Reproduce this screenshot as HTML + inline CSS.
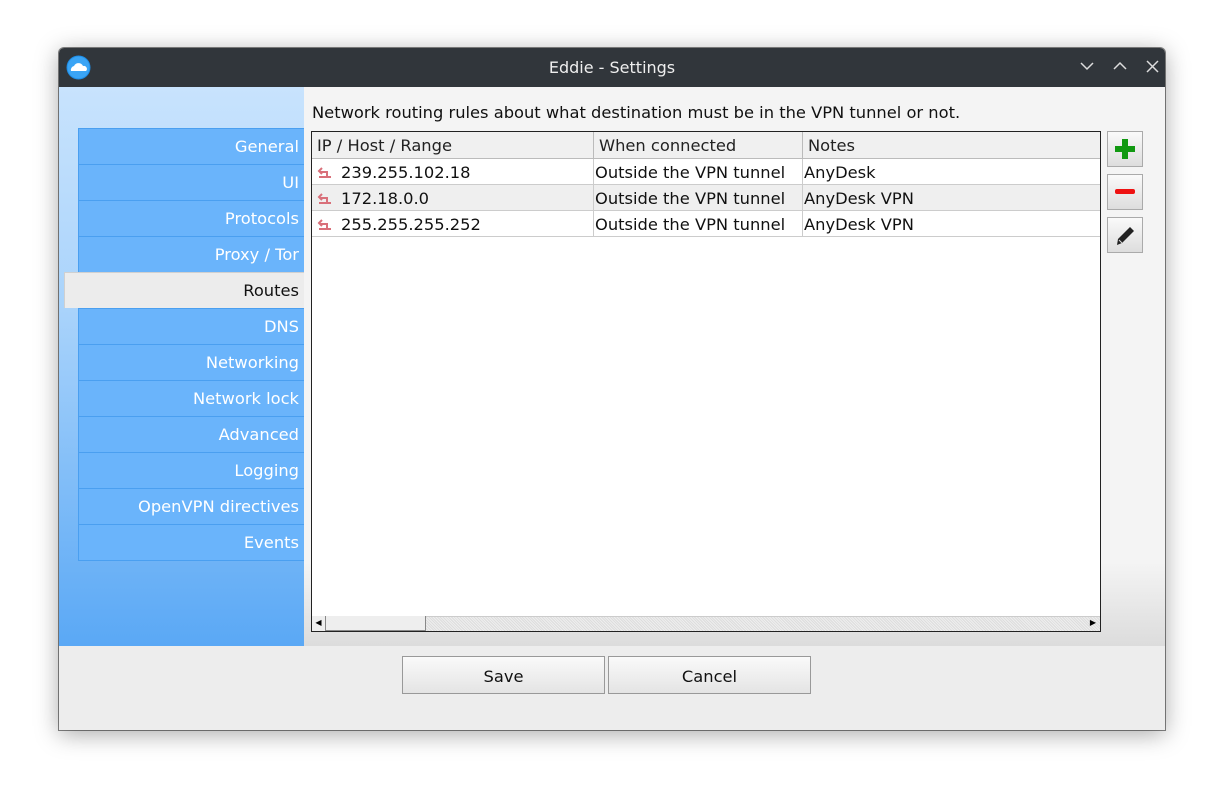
<!DOCTYPE html>
<html><head><meta charset="utf-8"><style>
*{box-sizing:border-box;margin:0;padding:0}
body{width:1224px;height:800px;background:#fff;font-family:"DejaVu Sans","Liberation Sans",sans-serif;position:relative;overflow:hidden}
.win{position:absolute;left:59px;top:48px;width:1106px;height:682px;background:#ededed;box-shadow:0 4px 24px rgba(0,0,0,.35),0 0 0 1px #888;border-radius:5px 5px 0 0;overflow:hidden}
.tb{position:absolute;left:0;top:0;width:100%;height:39px;background:#31363b;color:#eee;font-size:16px;text-align:center;line-height:40px}
.left{position:absolute;left:0;top:39px;width:245px;height:559px;background:linear-gradient(#c8e3fd,#a9d3fb 40%,#5aa8f5)}
.nav{position:absolute;left:19px;width:226px;height:36px;background:#6ab4fb;border-top:1px solid #4a9ff0;border-left:1px solid #4a9ff0;color:#fff;font-size:16.3px;text-align:right;padding-right:5px;line-height:36px}
.sel{left:5px;width:240px;background:#ececec;color:#111;border-color:#d0d0d0}
.right{position:absolute;left:245px;top:39px;width:861px;height:559px;background:linear-gradient(#f4f4f4 85%,#dcdcdc)}
.desc{position:absolute;left:253px;top:55px;font-size:16.3px;color:#111}
.tbl{position:absolute;left:252px;top:83px;width:790px;height:501px;background:#fff;border:1px solid #222}
.hd{position:absolute;top:0;height:27px;background:#f0f0f0;border-right:1px solid #bbb;border-bottom:1px solid #bbb;font-size:16.3px;line-height:28px;padding-left:5px;color:#222}
.row{position:absolute;left:0;width:788px;height:26px;border-bottom:1px solid #ccc;font-size:16.3px;line-height:27px;color:#111}
.row span{position:absolute;top:0}
.c{position:absolute;top:0;height:26px;border-right:1px solid #ccc}
.sb{position:absolute;left:0;bottom:0;width:788px;height:15px;background:repeating-linear-gradient(45deg,#ddd 0 1px,#eee 1px 2px);border-top:1px solid #ccc}
.ib{position:absolute;left:1048px;width:36px;height:36px;border:1px solid #aaa;background:linear-gradient(#fafafa,#ddd)}
.btn{position:absolute;top:608px;width:203px;height:38px;border:1px solid #999;background:linear-gradient(#fafafa,#e4e4e4);font-size:16.3px;text-align:center;line-height:39px;color:#111;font-weight:500}
</style></head><body>
<div class="win">
<div class="tb">Eddie - Settings
<svg style="position:absolute;left:7px;top:7px" width="25" height="25"><circle cx="12.5" cy="12.5" r="12" fill="#1d8ee8"/><circle cx="12.5" cy="12.5" r="11" fill="#3aa4f5"/><path d="M5 16 a4 4 0 0 1 3-5 a5 5 0 0 1 9 0 a3 3 0 0 1 3 5z" fill="#fff"/></svg>
<svg style="position:absolute;right:0;top:0" width="100" height="39" fill="none" stroke="#ddd" stroke-width="1.5"><path d="M16 15l6 6 6-6M49 21l6-6 6 6M82 13l11 11M93 13l-11 11"/></svg>
</div>
<div class="left">
<div class="nav" style="top:41px">General</div>
<div class="nav" style="top:77px">UI</div>
<div class="nav" style="top:113px">Protocols</div>
<div class="nav" style="top:149px">Proxy / Tor</div>
<div class="nav sel" style="top:185px">Routes</div>
<div class="nav" style="top:221px">DNS</div>
<div class="nav" style="top:257px">Networking</div>
<div class="nav" style="top:293px">Network lock</div>
<div class="nav" style="top:329px">Advanced</div>
<div class="nav" style="top:365px">Logging</div>
<div class="nav" style="top:401px">OpenVPN directives</div>
<div class="nav" style="top:437px;border-bottom:1px solid #4a9ff0;height:37px">Events</div>
</div>
<div class="right"></div>
<div class="desc">Network routing rules about what destination must be in the VPN tunnel or not.</div>
<div class="tbl">
<div class="hd" style="left:0;width:282px">IP / Host / Range</div>
<div class="hd" style="left:282px;width:209px">When connected</div>
<div class="hd" style="left:491px;width:297px;border-right:none">Notes</div>
<div class="row" style="top:27px;background:#fff"><div class="c" style="left:0;width:282px"></div><div class="c" style="left:282px;width:209px"></div><svg style="position:absolute;left:5px;top:5px" width="16" height="15" fill="none" stroke="#d9707a" stroke-width="2"><path d="M2 13h12M10 13V8H3M5 4L2 7l3 3"/></svg><span style="left:29px">239.255.102.18</span><span style="left:283px">Outside the VPN tunnel</span><span style="left:492px">AnyDesk</span></div>
<div class="row" style="top:53px;background:#efefef"><div class="c" style="left:0;width:282px"></div><div class="c" style="left:282px;width:209px"></div><svg style="position:absolute;left:5px;top:5px" width="16" height="15" fill="none" stroke="#d9707a" stroke-width="2"><path d="M2 13h12M10 13V8H3M5 4L2 7l3 3"/></svg><span style="left:29px">172.18.0.0</span><span style="left:283px">Outside the VPN tunnel</span><span style="left:492px">AnyDesk VPN</span></div>
<div class="row" style="top:79px;background:#fff"><div class="c" style="left:0;width:282px"></div><div class="c" style="left:282px;width:209px"></div><svg style="position:absolute;left:5px;top:5px" width="16" height="15" fill="none" stroke="#d9707a" stroke-width="2"><path d="M2 13h12M10 13V8H3M5 4L2 7l3 3"/></svg><span style="left:29px">255.255.255.252</span><span style="left:283px">Outside the VPN tunnel</span><span style="left:492px">AnyDesk VPN</span></div>
<div class="sb"><div style="position:absolute;left:0;top:-1px;width:14px;height:15px;background:#eee;border-right:1px solid #888;font-size:8px;line-height:14px;text-align:center">◀</div><div style="position:absolute;left:14px;top:-1px;width:100px;height:15px;background:#eee;border-right:1px solid #888;border-bottom:1px solid #888"></div><div style="position:absolute;right:0;top:-1px;width:14px;height:15px;font-size:8px;line-height:14px;text-align:center">▶</div></div>
</div>
<div class="ib" style="top:83px"><svg width="34" height="34"><path d="M14 7h6v7h7v6h-7v7h-6v-7H7v-6h7z" fill="#119911"/></svg></div>
<div class="ib" style="top:126px"><svg width="34" height="34"><rect x="7" y="14" width="20" height="5" rx="2" fill="#ee1111"/></svg></div>
<div class="ib" style="top:169px"><svg width="34" height="34"><path d="M9 27l1-6 12-12 4 4-12 12z" fill="#222"/><path d="M11 22l3 3" stroke="#ddd"/></svg></div>
<div class="btn" style="left:343px">Save</div>
<div class="btn" style="left:549px">Cancel</div>
</div>
</body></html>
